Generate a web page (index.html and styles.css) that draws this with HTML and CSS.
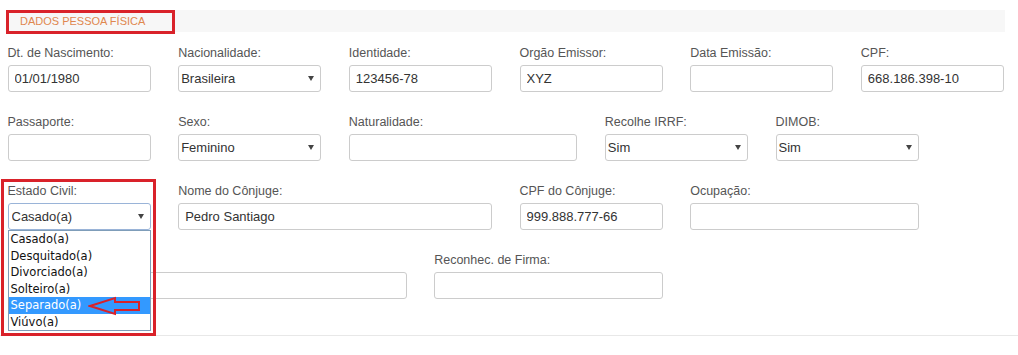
FILE: index.html
```html
<!DOCTYPE html>
<html>
<head>
    <meta charset="utf-8">
    <link rel="stylesheet" href="styles.css">
</head>
<body>
<div class="panel">
    <div class="panel-title">
        <span class="title-text">DADOS PESSOA FÍSICA</span>
        <span class="mark title-mark"></span>
    </div>

    <div class="rows">
        <!-- linha 1 -->
        <div class="row">
            <div class="field span-2"><label>Dt. de Nascimento:</label><input class="control" value="01/01/1980"></div>
            <div class="field span-2"><label>Nacionalidade:</label>
                <div class="select-wrap"><select class="control"><option>Brasileira</option></select></div>
            </div>
            <div class="field span-2"><label>Identidade:</label><input class="control" value="123456-78"></div>
            <div class="field span-2"><label>Orgão Emissor:</label><input class="control" value="XYZ"></div>
            <div class="field span-2"><label>Data Emissão:</label><input class="control" value=""></div>
            <div class="field span-2"><label>CPF:</label><input class="control" value="668.186.398-10"></div>
        </div>

        <!-- linha 2 -->
        <div class="row">
            <div class="field span-2"><label>Passaporte:</label><input class="control" value=""></div>
            <div class="field span-2"><label>Sexo:</label>
                <div class="select-wrap"><select class="control"><option>Feminino</option></select></div>
            </div>
            <div class="field span-3"><label>Naturalidade:</label><input class="control" value=""></div>
            <div class="field span-2"><label>Recolhe IRRF:</label>
                <div class="select-wrap"><select class="control"><option>Sim</option></select></div>
            </div>
            <div class="field span-2"><label>DIMOB:</label>
                <div class="select-wrap"><select class="control"><option>Sim</option></select></div>
            </div>
        </div>

        <!-- linha 3 -->
        <div class="row">
            <div class="field span-2 open">
                <label>Estado Civil:</label>
                <div class="select-wrap"><select class="control focused"><option>Casado(a)</option></select></div>
                <ul class="dropdown">
                    <li>Casado(a)</li>
                    <li>Desquitado(a)</li>
                    <li>Divorciado(a)</li>
                    <li>Solteiro(a)</li>
                    <li class="active">Separado(a)</li>
                    <li>Viúvo(a)</li>
                </ul>
                <svg class="pointer" width="54" height="22" viewBox="0 0 54 22">
                    <polygon points="2,10 27,2 27,6 51,6 51,14 27,14 27,18"
                             fill="none" stroke="#d9222a" stroke-width="2"/>
                </svg>
                <span class="mark civil-mark"></span>
            </div>
            <div class="field span-4"><label>Nome do Cônjuge:</label><input class="control" value="Pedro Santiago"></div>
            <div class="field span-2"><label>CPF do Cônjuge:</label><input class="control" value="999.888.777-66"></div>
            <div class="field span-3"><label>Ocupação:</label><input class="control" value=""></div>
        </div>

        <!-- linha 4 (rótulo coberto pela lista aberta) -->
        <div class="row">
            <div class="field span-5"><label>&nbsp;</label><input class="control" value=""></div>
            <div class="field span-3"><label>Reconhec. de Firma:</label><input class="control" value=""></div>
        </div>
    </div>
</div>
</body>
</html>
```

FILE: styles.css
```css
body {
    margin: 0;
    overflow: hidden;
    font-family: "Liberation Sans", Arial, sans-serif;
    background-color: #fff;
}

.panel {
    width: 1024px;
    padding-top: 10px;
    padding-bottom: 36px;
    border-bottom: 1px solid #e8e8e8;
}

.panel-title {
    position: relative;
    margin-left: 8px;
    width: 997px;
    height: 22px;
    background-color: #f7f7f7;
    display: flex;
    align-items: center;
}

.title-text {
    padding-left: 12px;
    font-size: 11px;
    color: #e0874f;
}

.mark {
    position: absolute;
    border: 3px solid #d9222a;
    box-sizing: border-box;
    z-index: 6;
}

.title-mark {
    left: -2px;
    top: 0;
    width: 169px;
    height: 24px;
}

.rows {
    display: flex;
    flex-direction: column;
    gap: 20px;
    padding-top: 11px;
}

.row {
    display: grid;
    grid-template-columns: repeat(12, 1fr);
    height: 49px;
}

.field {
    position: relative;
    padding: 0 20px 0 7.5px;
}

.span-2 { grid-column: span 2; }
.span-3 { grid-column: span 3; }
.span-4 { grid-column: span 4; }
.span-5 { grid-column: span 5; }

label {
    display: block;
    font-size: 12.5px;
    line-height: 20px;
    margin-bottom: 2px;
    color: #555;
    white-space: nowrap;
}

.control {
    display: block;
    width: 100%;
    height: 27px;
    box-sizing: border-box;
    margin: 0;
    padding: 0 6px;
    border: 1px solid #ccc;
    border-radius: 3px;
    background-color: #fff;
    font-family: "Liberation Sans", Arial, sans-serif;
    font-size: 13px;
    color: #333;
    outline: none;
}

select.control {
    appearance: none;
    -webkit-appearance: none;
    padding-left: 2px;
}

.select-wrap {
    position: relative;
}

.select-wrap::after {
    content: "";
    position: absolute;
    right: 7px;
    top: 11px;
    border-left: 3.5px solid transparent;
    border-right: 3.5px solid transparent;
    border-top: 5px solid #444;
}

.control.focused {
    border-color: #9ab4d8;
    padding-left: 3px;
}

.dropdown {
    position: absolute;
    left: 7.5px;
    top: 49px;
    width: 143px;
    margin: 0;
    padding: 0;
    list-style: none;
    box-sizing: border-box;
    border: 1px solid #7f9db9;
    background-color: #fff;
    z-index: 5;
    font-family: "DejaVu Sans", Tahoma, sans-serif;
    font-size: 11.5px;
    color: #111;
}

.dropdown li {
    height: 16.5px;
    line-height: 16.5px;
    padding-left: 2px;
}

.dropdown li.active {
    background-color: #3399ff;
    color: #fff;
}

.pointer {
    position: absolute;
    left: 88px;
    top: 115px;
    z-index: 6;
}

.civil-mark {
    left: 1px;
    top: -2px;
    width: 155px;
    height: 157px;
}
```
